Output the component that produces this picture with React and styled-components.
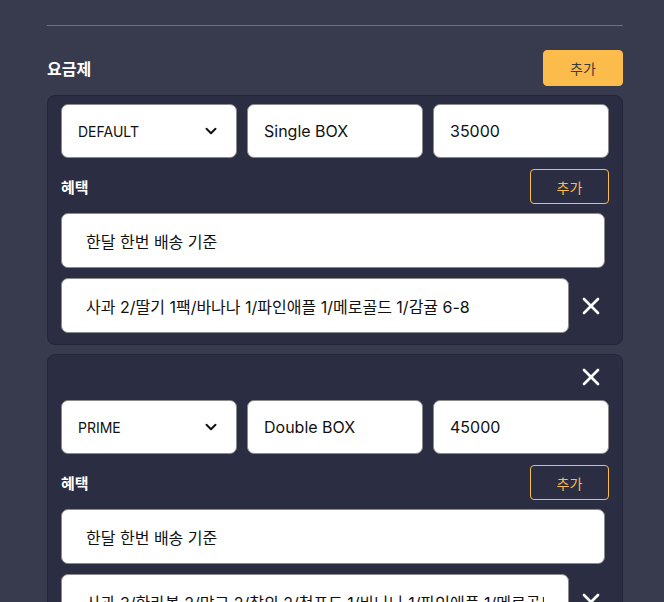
import React from "react";
import styled, { createGlobalStyle } from "styled-components";
import { ChevronDown, X } from "lucide-react";

const GlobalStyle = createGlobalStyle`
  html, body {
    margin: 0;
    background: #383a4e;
    font-family: Inter, "Noto Sans CJK KR", sans-serif;
  }
`;

const Page = styled.div`
  padding: 25px 41px 40px 47px;
  display: flex;
  flex-direction: column;
`;

const Divider = styled.hr`
  margin: 0 0 24px;
  border: none;
  border-top: 1px solid #6e6f7e;
`;

const SectionHead = styled.div`
  display: flex;
  align-items: center;
  justify-content: space-between;
  margin-bottom: 9px;
`;

const Title = styled.h3`
  margin: 0;
  color: #fff;
  font-size: 16px;
  font-weight: 600;
`;

const SubTitle = styled.h4`
  margin: 0;
  color: #fff;
  font-size: 15px;
  font-weight: 600;
`;

const AddButton = styled.button`
  width: ${p => (p.$outline ? "79px" : "80px")};
  height: ${p => (p.$outline ? "35px" : "36px")};
  border-radius: 4px;
  font-family: inherit;
  font-size: 14px;
  cursor: pointer;
  border: 1px solid #fbbc4b;
  background: ${p => (p.$outline ? "transparent" : "#fbbc4b")};
  color: ${p => (p.$outline ? "#fbbc4b" : "#3a3a3a")};
`;

const PlanList = styled.div`
  display: flex;
  flex-direction: column;
  gap: 9px;
`;

const Card = styled.div`
  background: #2b2d42;
  border: 1px solid #232538;
  border-radius: 8px;
  padding: 8px 13px 11px;
  display: flex;
  flex-direction: column;
  gap: 10px;
`;

const RemoveRow = styled.div`
  display: flex;
  justify-content: flex-end;
  align-items: flex-end;
  height: 28px;
  margin-bottom: -1px;
  padding-right: 4px;
`;

const IconButton = styled.button`
  background: none;
  border: none;
  padding: 0;
  color: #fff;
  display: flex;
  align-items: center;
  justify-content: center;
  cursor: pointer;
`;

const FieldRow = styled.div`
  display: grid;
  grid-template-columns: repeat(3, 1fr);
  gap: 10px;
`;

const SelectWrap = styled.div`
  position: relative;
  display: flex;

  svg {
    position: absolute;
    right: 17px;
    top: 50%;
    transform: translateY(-50%);
    pointer-events: none;
  }
`;

const Select = styled.select`
  appearance: none;
  width: 100%;
  height: 54px;
  border: 1px solid #8a8a8a;
  border-radius: 7px;
  background: #fff;
  padding: 0 16px;
  font-family: inherit;
  font-size: 14px;
  color: #111;
`;

const Field = styled.input`
  box-sizing: border-box;
  width: 100%;
  min-width: 0;
  height: ${p => (p.$benefit ? "55px" : "54px")};
  border: 1px solid #8a8a8a;
  border-radius: 7px;
  background: #fff;
  padding: 0 ${p => (p.$benefit ? "24px" : "16px")};
  font-family: inherit;
  font-size: 16px;
  color: #111;
  outline: none;
`;

const BenefitHead = styled.div`
  display: flex;
  align-items: center;
  justify-content: space-between;
  margin: 1px 0 -1px;
`;

const BenefitRow = styled.div`
  display: flex;
  align-items: center;
  padding-right: ${p => (p.$removable ? "0" : "4px")};
`;

const RemoveSlot = styled.div`
  width: 40px;
  padding-left: 8px;
  box-sizing: border-box;
  display: flex;
  flex: none;
`;

const plans = [
  {
    tier: "DEFAULT",
    name: "Single BOX",
    price: "35000",
    removable: false,
    benefits: ["한달 한번 배송 기준", "사과 2/딸기 1팩/바나나 1/파인애플 1/메로골드 1/감귤 6-8"],
  },
  {
    tier: "PRIME",
    name: "Double BOX",
    price: "45000",
    removable: true,
    benefits: [
      "한달 한번 배송 기준",
      "사과 3/한라봉 2/망고 2/참외 2/청포도 1/바나나 1/파인애플 1/메로골드 1/감귤 6-8",
    ],
  },
];

function Plan({ plan }) {
  return (
    <Card>
      {plan.removable && (
        <RemoveRow>
          <IconButton aria-label="삭제">
            <X size={28} strokeWidth={2.3} />
          </IconButton>
        </RemoveRow>
      )}
      <FieldRow>
        <SelectWrap>
          <Select defaultValue={plan.tier}>
            <option>DEFAULT</option>
            <option>PRIME</option>
          </Select>
          <ChevronDown size={18} strokeWidth={2.6} color="#111" />
        </SelectWrap>
        <Field defaultValue={plan.name} />
        <Field defaultValue={plan.price} />
      </FieldRow>
      <BenefitHead>
        <SubTitle>혜택</SubTitle>
        <AddButton $outline>추가</AddButton>
      </BenefitHead>
      {plan.benefits.map((b, i) => (
        <BenefitRow key={i} $removable={i > 0}>
          <Field $benefit defaultValue={b} />
          {i > 0 && (
            <RemoveSlot>
              <IconButton aria-label="혜택 삭제">
                <X size={28} strokeWidth={2.3} />
              </IconButton>
            </RemoveSlot>
          )}
        </BenefitRow>
      ))}
    </Card>
  );
}

export default function App() {
  return (
    <>
      <GlobalStyle />
      <Page>
        <Divider />
        <SectionHead>
          <Title>요금제</Title>
          <AddButton>추가</AddButton>
        </SectionHead>
        <PlanList>
          {plans.map(p => (
            <Plan key={p.tier} plan={p} />
          ))}
        </PlanList>
      </Page>
    </>
  );
}
